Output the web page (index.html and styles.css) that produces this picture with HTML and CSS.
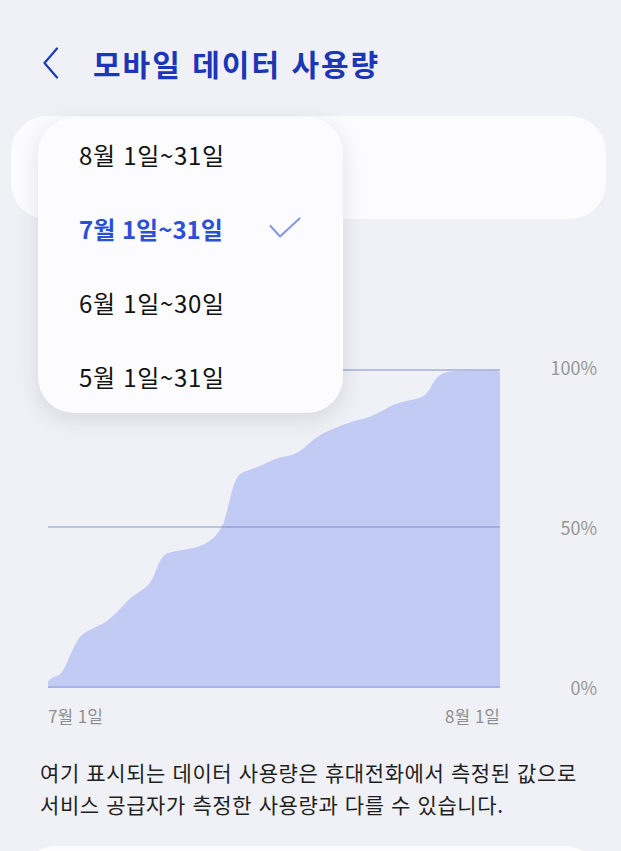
FILE: index.html
```html
<!DOCTYPE html>
<html lang="ko">
<head>
  <meta charset="UTF-8">
  <meta name="viewport" content="width=device-width, initial-scale=1.0">
  <title>모바일 데이터 사용량</title>
  <link rel="stylesheet" href="styles.css">
</head>
<body>

<div class="header">
  <button class="back" aria-label="뒤로">
    <svg width="18" height="32" viewBox="0 0 18 32">
      <path d="M15 1.5 L2.5 16 L15 30.5" fill="none" stroke="#1d3bb8" stroke-width="2.2" stroke-linecap="round" stroke-linejoin="round"/>
    </svg>
  </button>
  <h1 class="title">모바일 데이터 사용량</h1>
</div>

<div class="period-card">
  <ul class="dropdown">
    <li class="option">8월 1일~31일</li>
    <li class="option selected">
      <span>7월 1일~31일</span>
      <svg class="check" width="32" height="22" viewBox="0 0 32 22">
        <path d="M1.5 9 L11 19.5 L30.5 1.5" fill="none" stroke="#8799e9" stroke-width="2.2" stroke-linecap="round" stroke-linejoin="round"/>
      </svg>
    </li>
    <li class="option">6월 1일~30일</li>
    <li class="option">5월 1일~31일</li>
  </ul>
</div>

<div class="chart">
  <svg class="plot" width="452" height="330" viewBox="0 0 452 330">
    <path fill="#c2cbf4" d="M0,325 L0,321 C0,317 6,315 11,313 C17,310 22,290 31,276 C38,268 47,266 56,261 C68,254 78,238 88,232 C96,227 100,224 104,218 C110,205 112,194 120,191 C130,188 145,187 152,184 C165,179 172,170 176,160 C182,140 185,118 192,112 C200,108 205,107 212,104 C222,99 230,95 240,94 C248,92 250,90 256,86 C266,77 272,72 285,67 C297,62 305,59 318,56 C330,52 338,46 348,42 C356,39 365,38 374,35 C382,32 384,18 392,13 C398,9 405,9 415,9 C428,8 440,8 448,8 Q452,8 452,12 L452,325 Z"/>
    <line x1="0" y1="8" x2="452" y2="8" stroke="#a7aed6" stroke-width="1.5"/>
    <line x1="0" y1="165" x2="452" y2="165" stroke="rgba(120,130,190,0.55)" stroke-width="1.5"/>
    <line x1="0" y1="325" x2="452" y2="325" stroke="#a9b2e4" stroke-width="2"/>
  </svg>
  <div class="y-labels">
    <span>100%</span>
    <span>50%</span>
    <span>0%</span>
  </div>
</div>

<div class="x-labels">
  <span>7월 1일</span>
  <span>8월 1일</span>
</div>

<p class="note">여기 표시되는 데이터 사용량은 휴대전화에서 측정된 값으로<br>서비스 공급자가 측정한 사용량과 다를 수 있습니다.</p>

<div class="bottom-card"></div>

</body>
</html>
```

FILE: styles.css
```css
body {
  margin: 0;
  background-color: #f0f1f6;
  font-family: "Noto Sans CJK KR", "Noto Sans", sans-serif;
  color: #1a1a1a;
  overflow: hidden;
  height: 851px;
}

.header {
  display: flex;
  align-items: center;
  height: 36px;
  padding: 45px 0 0 42px;
  margin-bottom: 35px;
}

.back {
  background: none;
  border: none;
  padding: 0;
  width: 18px;
  height: 32px;
  margin-right: 33px;
  display: flex;
}

.title {
  margin: 0;
  font-size: 30px;
  line-height: 36px;
  font-weight: 700;
  color: #1b36b6;
  letter-spacing: 2px;
}

.period-card {
  position: relative;
  height: 103px;
  margin: 0 15px 0 11px;
  background: #fcfcfe;
  border-radius: 36px;
  z-index: 2;
}

.dropdown {
  position: absolute;
  left: 27px;
  top: 1px;
  width: 305px;
  margin: 0;
  padding: 0;
  list-style: none;
  background: #fcfcfe;
  border-radius: 36px;
  box-shadow: 0 6px 22px rgba(40, 44, 70, 0.13);
}

.option {
  display: flex;
  align-items: center;
  justify-content: space-between;
  height: 74px;
  padding: 0 42px 0 41px;
  font-size: 24px;
  letter-spacing: 0.7px;
  color: #111;
}

.option.selected {
  color: #2a50d8;
  font-weight: 700;
  letter-spacing: 0;
}

.chart {
  display: flex;
  margin-top: 143px;
  padding-left: 48px;
}

.plot {
  display: block;
}

.y-labels {
  width: 97px;
  height: 336px;
  margin-top: -3px;
  display: flex;
  flex-direction: column;
  justify-content: space-between;
  align-items: flex-end;
  font-size: 18px;
  line-height: 16px;
  color: #969696;
}

.x-labels {
  display: flex;
  justify-content: space-between;
  width: 452px;
  margin: 10px 0 0 48px;
  font-size: 17px;
  line-height: 22px;
  color: #8f8f8f;
}

.note {
  margin: 29px 0 0 40px;
  font-size: 21px;
  line-height: 32px;
  letter-spacing: 0.6px;
  color: #1f1f1f;
}

.bottom-card {
  height: 80px;
  margin: 26px 20px 0;
  background: #fcfcfe;
  border-radius: 36px;
}
```
